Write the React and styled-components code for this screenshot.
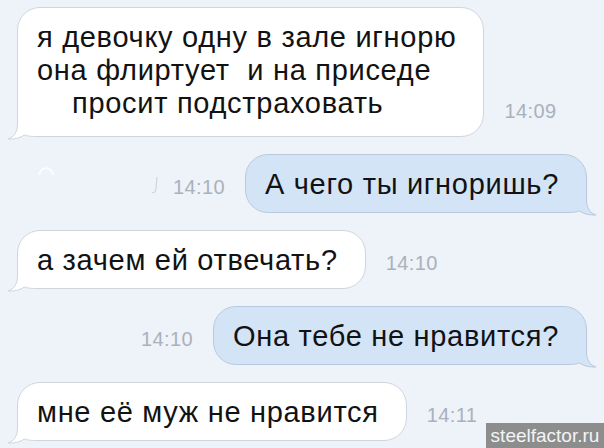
import React from "react";
import styled, { createGlobalStyle } from "styled-components";

const GlobalStyle = createGlobalStyle`
  html, body {
    margin: 0;
    padding: 0;
    background: #eef2f9;
  }
  body {
    font-family: "Liberation Sans", Arial, sans-serif;
  }
`;

const Screen = styled.div`
  position: relative;
  width: 604px;
  height: 448px;
  overflow: hidden;
  box-sizing: border-box;
  padding: 7px 17px 0 17px;
  background: #eef2f9;
  display: flex;
  flex-direction: column;
  gap: 17px;
`;

const Row = styled.div`
  display: flex;
  align-items: flex-end;
  justify-content: ${props => (props.$out ? "flex-end" : "flex-start")};
  gap: 20px;
`;

const Bubble = styled.div`
  position: relative;
  box-sizing: border-box;
  padding: 13px 27px ${props => props.$pb || 11}px 19px;
  border: 1px solid ${props => (props.$out ? "#b9c9dd" : "#cfd6df")};
  background: ${props => (props.$out ? "#d4e4f7" : "#ffffff")};
  border-radius: 23px;
  color: #121212;
  font-size: 29px;
  letter-spacing: 0.7px;
  line-height: 33px;
  white-space: pre;
`;

const Line = styled.div`
  position: relative;
  padding-left: ${props => props.$indent || 0}px;
`;

const TailSvg = styled.svg`
  position: absolute;
  bottom: -4px;
  width: 40px;
  height: 32px;
  overflow: visible;
  ${props =>
    props.$out
      ? "right: -11px; transform: scaleX(-1);"
      : "left: -11px;"}
`;

const Time = styled.span`
  font-size: 20px;
  letter-spacing: 0.4px;
  line-height: 20px;
  color: #a9b1bc;
  margin-bottom: 16px;
  white-space: nowrap;
`;

const Ghost = styled.svg`
  align-self: flex-start;
  width: 18px;
  height: 14px;
  margin: 8px auto 0 20px;
`;

const ReadMark = styled.svg`
  width: 7px;
  height: 18px;
  margin: 0 -5px 19px 0;
`;

const Watermark = styled.div`
  position: absolute;
  right: 0;
  bottom: 0;
  width: 118px;
  height: 25px;
  background: #8d8d8e;
  color: #f4f4f4;
  font-size: 19px;
  line-height: 25px;
  text-align: center;
`;

const Tail = ({ out }) => {
  const fill = out ? "#d4e4f7" : "#ffffff";
  const stroke = out ? "#b9c9dd" : "#cfd6df";
  const edge =
    "M10.5 0 L10.5 16 C10.5 24 7 29 1 31 C7 31.5 13 30 17.5 27 C21 28.3 25 28.5 30 28.5 L40 28.5";
  return (
    <TailSvg $out={out} viewBox="0 0 40 32">
      <path d={edge + " L40 0 Z"} fill={fill} />
      <path d={edge} fill="none" stroke={stroke} strokeWidth="1" />
    </TailSvg>
  );
};

const Message = ({ out, lines, pb }) => (
  <Bubble $out={out} $pb={pb}>
    <Tail out={out} />
    {lines.map((l, i) => (
      <Line key={i} $indent={l.indent}>
        {l.text}
      </Line>
    ))}
  </Bubble>
);

export default function App() {
  return (
    <>
      <GlobalStyle />
      <Screen>
        <Row>
          <Message
            pb={16}
            lines={[
              { text: "я девочку одну в зале игнорю" },
              { text: "она флиртует  и на приседе" },
              { text: "просит подстраховать", indent: 35 },
            ]}
          />
          <Time>14:09</Time>
        </Row>

        <Row $out>
          <Ghost viewBox="0 0 18 14">
            <path d="M2 13 C4 4 14 4 16 13" fill="none" stroke="#ffffff" strokeOpacity="0.8" strokeWidth="2" />
          </Ghost>
          <ReadMark viewBox="0 0 7 18">
            <path d="M6 1 L5 13 C4.6 16.5 2.5 17.2 1 16.3" fill="none" stroke="#cdd4dd" strokeWidth="1.2" />
          </ReadMark>
          <Time>14:10</Time>
          <Message out lines={[{ text: "А чего ты игноришь?" }]} />
        </Row>

        <Row>
          <Message lines={[{ text: "а зачем ей отвечать?" }]} />
          <Time>14:10</Time>
        </Row>

        <Row $out>
          <Time>14:10</Time>
          <Message out lines={[{ text: "Она тебе не нравится?" }]} />
        </Row>

        <Row>
          <Message lines={[{ text: "мне её муж не нравится" }]} />
          <Time>14:11</Time>
        </Row>

        <Watermark>steelfactor.ru</Watermark>
      </Screen>
    </>
  );
}
